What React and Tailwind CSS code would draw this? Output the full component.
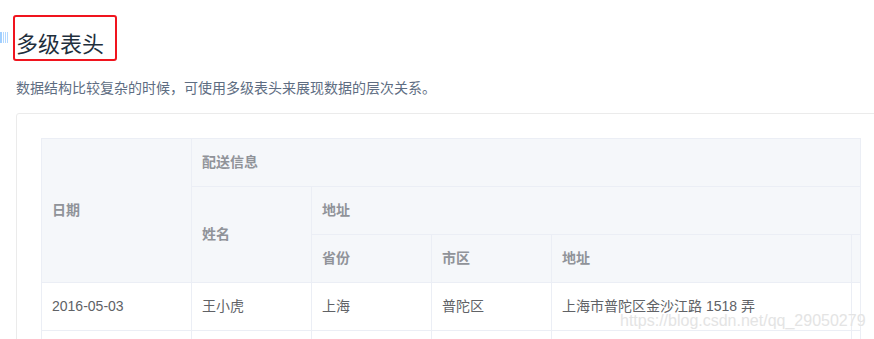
import React from "react";

const font = { fontFamily: '"Liberation Sans", "Noto Sans CJK SC", sans-serif' };

function Th({ children, ...rest }) {
    return (
        <th
            {...rest}
            className="bg-[#f5f7fa] border-r border-b border-[#ebeef5] px-[10px] py-3 text-left align-middle text-sm leading-[23px] font-bold text-[#909399]"
        >
            {children}
        </th>
    );
}

function Td({ children }) {
    return (
        <td className="bg-white border-r border-b border-[#ebeef5] px-[10px] py-3 text-left align-middle text-sm leading-[23px] text-[#606266] whitespace-nowrap">
            {children}
        </td>
    );
}

export default function App() {
    return (
        <div className="relative w-[874px] h-[339px] overflow-hidden bg-white" style={font}>
            {/* clipped anchor mark on the left edge */}
            <div className="absolute left-0 top-[32px] flex gap-[1px]">
                <span className="block w-[2px] h-[11px] bg-[#a0cfff]"></span>
                <span className="block w-[1px] h-[11px] bg-[#b3d8ff]"></span>
                <span className="block w-[1px] h-[11px] bg-[#b3d8ff]"></span>
                <span className="block w-[1px] h-[11px] bg-[#b3d8ff]"></span>
            </div>

            <div className="pl-4 pt-[29px]">
                {/* Title with red annotation box */}
                <div className="relative">
                    <h3 className="text-[22px] leading-[32px] font-normal text-[#1f2f3d]">多级表头</h3>
                    <div className="absolute left-[-3px] top-[-14px] w-[104px] h-[46px] border-2 border-[#f0141e] rounded-[3px]"></div>
                </div>

                <p className="mt-[16px] text-sm leading-[22px] text-[#5e6d82]">
                    数据结构比较复杂的时候，可使用多级表头来展现数据的层次关系。
                </p>

                {/* Demo card */}
                <div className="mt-[14px] w-[886px] border border-[#ebebeb] rounded-[3px] p-6">
                    <div className="w-[820px] overflow-hidden border-l border-t border-r border-[#ebeef5]">
                        <table className="table-fixed w-[930px] border-separate border-spacing-0">
                            <colgroup>
                                <col className="w-[150px]" />
                                <col className="w-[120px]" />
                                <col className="w-[120px]" />
                                <col className="w-[120px]" />
                                <col className="w-[300px]" />
                                <col className="w-[120px]" />
                            </colgroup>
                            <thead>
                                <tr>
                                    <Th rowSpan={3}>日期</Th>
                                    <Th colSpan={5}>配送信息</Th>
                                </tr>
                                <tr>
                                    <Th rowSpan={2}>姓名</Th>
                                    <Th colSpan={4}>地址</Th>
                                </tr>
                                <tr>
                                    <Th>省份</Th>
                                    <Th>市区</Th>
                                    <Th>地址</Th>
                                    <Th>邮编</Th>
                                </tr>
                            </thead>
                            <tbody>
                                <tr>
                                    <Td>2016-05-03</Td>
                                    <Td>王小虎</Td>
                                    <Td>上海</Td>
                                    <Td>普陀区</Td>
                                    <Td>上海市普陀区金沙江路 1518 弄</Td>
                                    <Td>200333</Td>
                                </tr>
                                <tr>
                                    <Td>2016-05-02</Td>
                                    <Td>王小虎</Td>
                                    <Td>上海</Td>
                                    <Td>普陀区</Td>
                                    <Td>上海市普陀区金沙江路 1518 弄</Td>
                                    <Td>200333</Td>
                                </tr>
                            </tbody>
                        </table>
                    </div>
                </div>
            </div>

            {/* watermark */}
            <div
                className="absolute left-[620px] top-[311px] text-base leading-[20px] text-[#e4e4e4] whitespace-nowrap"
                style={{ fontFamily: '"Liberation Sans", sans-serif', textShadow: "0 0 1px #ffffff" }}
            >
                https://blog.csdn.net/qq_29050279
            </div>
        </div>
    );
}
